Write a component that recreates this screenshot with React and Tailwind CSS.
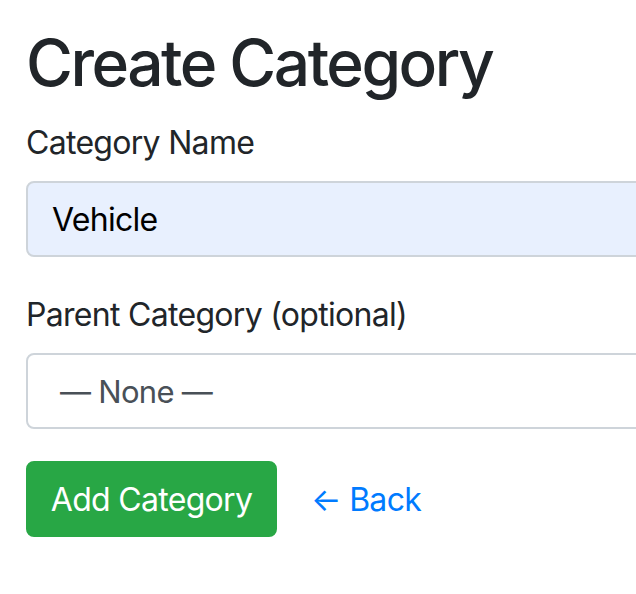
export default function App() {
  return (
    <div
      className="min-h-[594px] w-[636px] overflow-hidden bg-white pl-[26px] pt-[24px] text-[#212529]"
      style={{ fontFamily: 'Inter, "Liberation Sans", sans-serif' }}
    >
      <h2 className="mb-[16px] whitespace-nowrap pt-[1px] text-[64px] font-medium leading-[1.2] tracking-[-2.5px]">
        Create Category
      </h2>

      <form className="w-[900px] tracking-[-0.7px]">
        <div className="mb-[32px]">
          <label className="mb-[14px] block pt-[1px] text-[32px] leading-[1.5]">Category Name</label>
          <input
            type="text"
            defaultValue="Vehicle"
            className="block h-[76px] w-full rounded-[8px] border-2 border-[#ced4da] bg-[#e8f0fe] px-[24px] pt-[2px] text-[32px] tracking-[-0.7px] text-black outline-none"
          />
        </div>

        <div className="mb-[32px]">
          <label className="mb-[14px] block pt-[2px] text-[32px] leading-[1.5]">Parent Category (optional)</label>
          <div className="flex h-[76px] w-full items-center rounded-[8px] border-2 border-[#ced4da] bg-white pl-[32px] pt-[2px] text-[31px] text-[#495057]">
            — None —
          </div>
        </div>

        <div className="flex items-center gap-[34px]">
          <button
            type="button"
            className="h-[76px] w-[251px] rounded-[8px] border-2 border-[#28a745] bg-[#28a745] pt-[2px] text-[32px] tracking-[-0.7px] text-white"
          >
            Add Category
          </button>
          <a href="#" className="pt-[2px] text-[32px] text-[#007bff]">
            ← Back
          </a>
        </div>
      </form>
    </div>
  );
}
